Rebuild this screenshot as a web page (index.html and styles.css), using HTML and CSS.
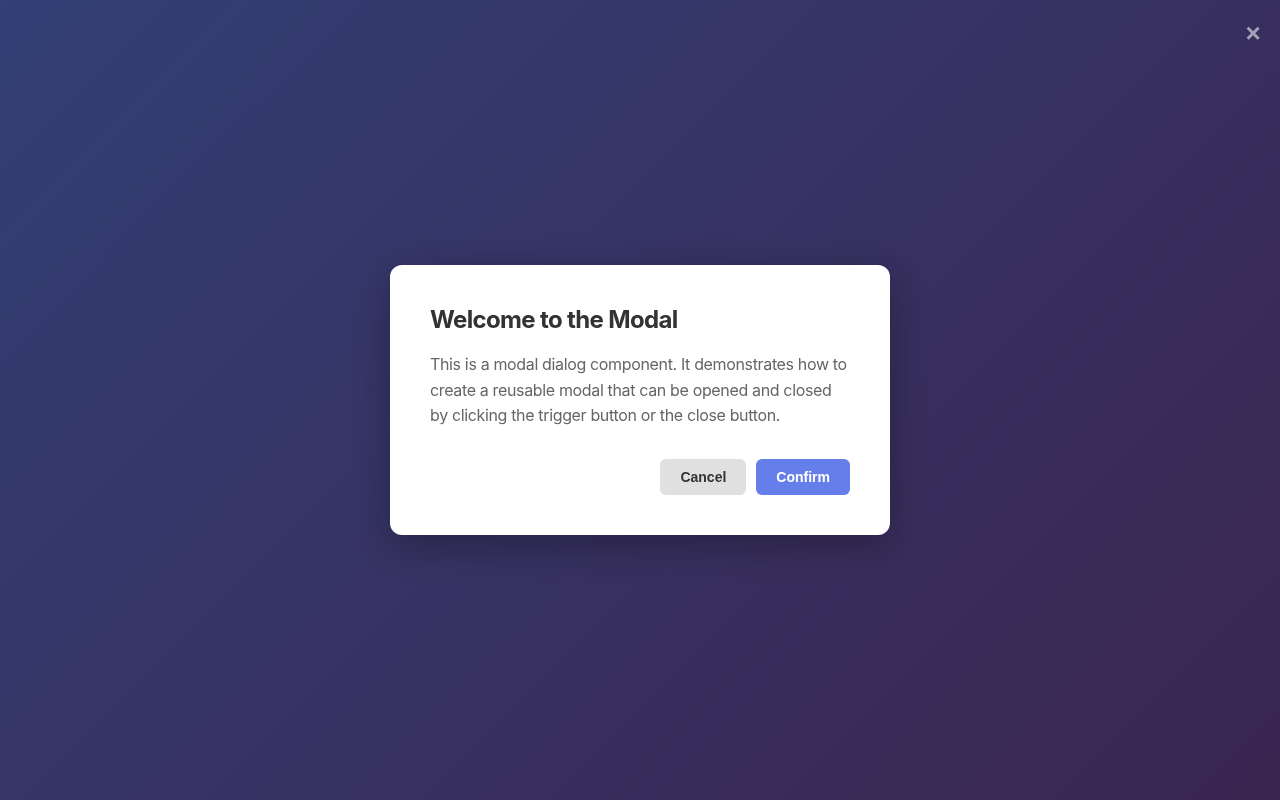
FILE: index.html
```html
<!DOCTYPE html>
<html lang="en">
<head>
<meta charset="utf-8">
<title>Modal</title>
<link rel="stylesheet" href="styles.css">
</head>
<body>
<div class="page">
  <div class="overlay">
    <button class="close" aria-label="Close">&times;</button>
    <div class="modal">
      <h2 class="modal-title">Welcome to the Modal</h2>
      <p class="modal-text">This is a modal dialog component. It demonstrates how to create a reusable modal that can be opened and closed by clicking the trigger button or the close button.</p>
      <div class="modal-actions">
        <button class="btn btn-cancel">Cancel</button>
        <button class="btn btn-confirm">Confirm</button>
      </div>
    </div>
  </div>
</div>
</body>
</html>
```
FILE: styles.css
```css
html, body {
  margin: 0;
  padding: 0;
  height: 100%;
}
body {
  font-family: Inter, "Noto Sans", sans-serif;
  background: linear-gradient(135deg, #667eea 0%, #764ba2 100%);
}
.page {
  height: 100vh;
}
.overlay {
  position: fixed;
  inset: 0;
  background: rgba(0, 0, 0, 0.5);
  display: flex;
  align-items: center;
  justify-content: center;
}
.close {
  position: absolute;
  top: 18px;
  right: 15px;
  width: 24px;
  height: 30px;
  padding: 0;
  border: none;
  background: none;
  color: rgba(255, 255, 255, 0.55);
  font-family: "Liberation Sans", Arial, sans-serif;
  font-size: 26px;
  font-weight: bold;
  line-height: 30px;
  cursor: pointer;
}
.modal {
  width: 500px;
  box-sizing: border-box;
  padding: 40px;
  background: #fff;
  border-radius: 12px;
  box-shadow: 0 10px 40px rgba(0, 0, 0, 0.3);
}
.modal-title {
  margin: 0 0 17px;
  font-size: 24px;
  font-weight: 700;
  line-height: 30px;
  color: #333;
  letter-spacing: -0.65px;
}
.modal-text {
  margin: 0 0 30px;
  font-size: 16px;
  line-height: 25.6px;
  color: #666;
  letter-spacing: -0.35px;
}
.modal-actions {
  display: flex;
  justify-content: flex-end;
  gap: 10px;
}
.btn {
  height: 36px;
  padding: 0 20px;
  border: none;
  border-radius: 6px;
  font-family: "Liberation Sans", Arial, sans-serif;
  font-size: 14px;
  font-weight: bold;
  cursor: pointer;
}
.btn-cancel {
  background: #e0e0e0;
  color: #333;
}
.btn-confirm {
  background: #667eea;
  color: #fff;
}
```
